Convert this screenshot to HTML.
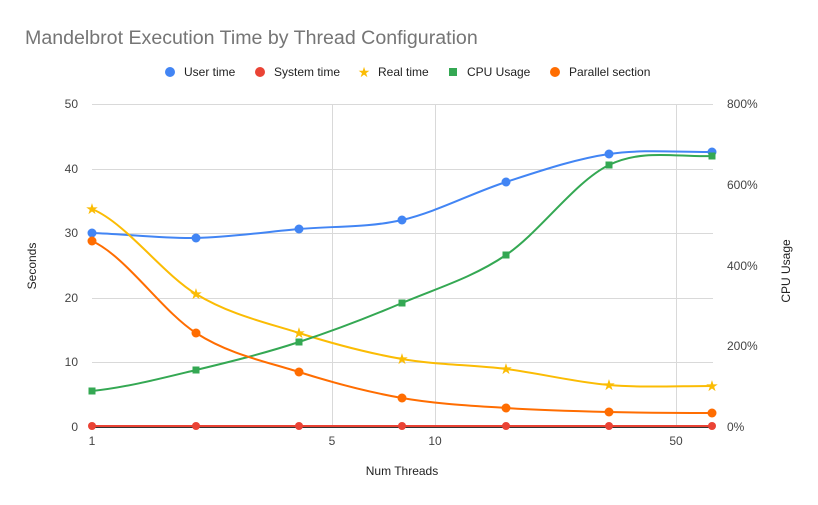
<!DOCTYPE html>
<html><head><meta charset="utf-8"><style>
html,body{margin:0;padding:0;background:#fff;}
svg{display:block;font-family:"Liberation Sans",Arial,sans-serif;}
</style></head><body>
<svg width="818" height="505" viewBox="0 0 818 505" xmlns="http://www.w3.org/2000/svg">
<rect width="818" height="505" fill="#fff"/>
<text x="25" y="44" font-size="19.6" fill="#757575">Mandelbrot Execution Time by Thread Configuration</text>
<g font-size="12" fill="#222">
<circle cx="170" cy="72" r="5" fill="#4285f4"/><text x="184" y="76">User time</text>
<circle cx="260" cy="72" r="5" fill="#ea4335"/><text x="274" y="76">System time</text>
<text x="364" y="77" font-size="14" fill="#fbbc04" text-anchor="middle">★</text><text x="378" y="76">Real time</text>
<rect x="449" y="68" width="8" height="8" fill="#34a853"/><text x="467" y="76">CPU Usage</text>
<circle cx="555" cy="72" r="5" fill="#ff6d01"/><text x="569" y="76">Parallel section</text>
</g>
<g stroke="#d9d9d9" stroke-width="1">
<line x1="92" x2="713" y1="104.5" y2="104.5"/>
<line x1="92" x2="713" y1="169.5" y2="169.5"/>
<line x1="92" x2="713" y1="233.5" y2="233.5"/>
<line x1="92" x2="713" y1="298.5" y2="298.5"/>
<line x1="92" x2="713" y1="362.5" y2="362.5"/>
<line x1="332.5" x2="332.5" y1="104" y2="427"/>
<line x1="435.5" x2="435.5" y1="104" y2="427"/>
<line x1="676.5" x2="676.5" y1="104" y2="427"/>
</g>
<line x1="92" x2="713" y1="427.5" y2="427.5" stroke="#333" stroke-width="1"/>
<g font-size="12" fill="#444">
<text x="78" y="108" text-anchor="end">50</text>
<text x="78" y="173" text-anchor="end">40</text>
<text x="78" y="237" text-anchor="end">30</text>
<text x="78" y="302" text-anchor="end">20</text>
<text x="78" y="366" text-anchor="end">10</text>
<text x="78" y="431" text-anchor="end">0</text>
<text x="727" y="108">800%</text>
<text x="727" y="189">600%</text>
<text x="727" y="270">400%</text>
<text x="727" y="350">200%</text>
<text x="727" y="431">0%</text>
<text x="92" y="445" text-anchor="middle">1</text>
<text x="332" y="445" text-anchor="middle">5</text>
<text x="435" y="445" text-anchor="middle">10</text>
<text x="676" y="445" text-anchor="middle">50</text>
</g>
<g font-size="12" fill="#222">
<text x="402" y="475" text-anchor="middle">Num Threads</text>
<text transform="translate(36,266) rotate(-90)" text-anchor="middle">Seconds</text>
<text transform="translate(790,271) rotate(-90)" text-anchor="middle">CPU Usage</text>
</g>
<g fill="none" stroke-width="2">
<path stroke="#ea4335" d="M92 426 L712 426"/>
<path stroke="#4285f4" d="M92 233 C126 234 162 238.7 196 238 C230 237.3 265 232 299 229 C333 226 368 227.8 402 220 C436 212.2 472 193 506 182 C540 171 575 159 609 154 C643 149 678 152.3 712 152"/>
<path stroke="#fbbc04" d="M92 209 C126 223 162 273.3 196 294 C230 314.7 265 322.2 299 333 C333 343.8 368 353 402 359 C436 365 472 364.7 506 369 C540 373.3 575 382.2 609 385 C643 387.8 678 386 712 386"/>
<path stroke="#34a853" d="M92 391 C126 387.5 162 378.2 196 370 C230 361.8 265 353.2 299 342 C333 330.8 368 317.5 402 303 C436 288.5 472 278 506 255 C540 232 575 181.5 609 165 C643 148.5 678 157.5 712 156"/>
<path stroke="#ff6d01" d="M92 241 C126 256.3 162 311.2 196 333 C230 354.8 265 361.2 299 372 C333 382.8 368 392 402 398 C436 404 472 405.7 506 408 C540 410.3 575 411.2 609 412 C643 412.8 678 413 712 413"/>
</g>
<g fill="#ea4335">
<circle cx="92" cy="426" r="4"/><circle cx="196" cy="426" r="4"/><circle cx="299" cy="426" r="4"/><circle cx="402" cy="426" r="4"/><circle cx="506" cy="426" r="4"/><circle cx="609" cy="426" r="4"/><circle cx="712" cy="426" r="4"/>
</g>
<g fill="#4285f4">
<circle cx="92" cy="233" r="4.5"/><circle cx="196" cy="238" r="4.5"/><circle cx="299" cy="229" r="4.5"/><circle cx="402" cy="220" r="4.5"/><circle cx="506" cy="182" r="4.5"/><circle cx="609" cy="154" r="4.5"/><circle cx="712" cy="152" r="4.5"/>
</g>
<g fill="#34a853">
<rect x="88.5" y="387.5" width="7" height="7"/><rect x="192.5" y="366.5" width="7" height="7"/><rect x="295.5" y="338.5" width="7" height="7"/><rect x="398.5" y="299.5" width="7" height="7"/><rect x="502.5" y="251.5" width="7" height="7"/><rect x="605.5" y="161.5" width="7" height="7"/><rect x="708.5" y="152.5" width="7" height="7"/>
</g>
<g fill="#ff6d01">
<circle cx="92" cy="241" r="4.5"/><circle cx="196" cy="333" r="4.5"/><circle cx="299" cy="372" r="4.5"/><circle cx="402" cy="398" r="4.5"/><circle cx="506" cy="408" r="4.5"/><circle cx="609" cy="412" r="4.5"/><circle cx="712" cy="413" r="4.5"/>
</g>
<g fill="#fbbc04" font-size="15" text-anchor="middle">
<text x="92" y="214">★</text><text x="196" y="299">★</text><text x="299" y="338">★</text><text x="402" y="364">★</text><text x="506" y="374">★</text><text x="609" y="390">★</text><text x="712" y="391">★</text>
</g>
</svg>
</body></html>
